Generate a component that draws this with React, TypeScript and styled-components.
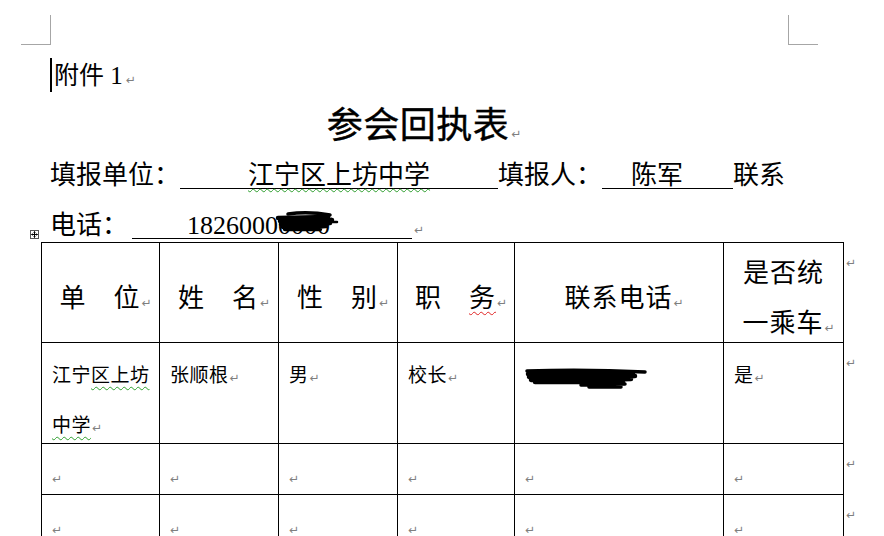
import React from "react";
import styled, { createGlobalStyle } from "styled-components";

const GlobalStyle = createGlobalStyle`
  *, *::before, *::after { box-sizing: border-box; }
  html, body { margin: 0; padding: 0; background: #fff; overflow: hidden; }
  body {
    font-family: "Liberation Serif", "Noto Sans CJK SC", serif;
    color: #000;
  }
`;

const Page = styled.div`
  width: 884px;
  height: 536px;
  overflow: hidden;
  background: #fff;
`;

const CornerRow = styled.div`
  display: flex;
  justify-content: space-between;
  padding: 15px 66px 0 21px;
`;

const Corner = styled.div<{ $side: "left" | "right" }>`
  width: 30px;
  height: 30px;
  border-bottom: 1px solid #a6a6a6;
  ${(p) =>
    p.$side === "left"
      ? "border-right: 1px solid #a6a6a6;"
      : "border-left: 1px solid #a6a6a6;"}
`;

const Body = styled.div`
  width: 788px;
  padding-left: 50px;
`;

const Attachment = styled.div`
  margin-top: 7px;
  font-size: 25px;
  line-height: 48px;
  white-space: nowrap;
`;

const Caret = styled.span`
  display: inline-block;
  width: 2px;
  height: 34px;
  background: #000;
  vertical-align: -8px;
  margin-right: 2px;
`;

const Title = styled.div`
  font-family: "Noto Sans CJK SC", sans-serif;
  font-size: 36px;
  line-height: 44px;
  text-align: center;
  margin-bottom: 7px;
  letter-spacing: 0.5px;
  -webkit-text-stroke: 0.4px #000;
`;

const FormLine = styled.div<{ $h?: number }>`
  font-size: 26px;
  line-height: 50px;
  white-space: nowrap;
  ${(p) => (p.$h ? `height: ${p.$h}px;` : "")}
`;

const Field = styled.span<{ $w: number; $pad: number; $ml?: number }>`
  display: inline-block;
  width: ${(p) => p.$w}px;
  padding-left: ${(p) => p.$pad}px;
  margin-left: ${(p) => p.$ml ?? 0}px;
  line-height: 24px;
  border-bottom: 1px solid #000;
  white-space: nowrap;
`;

const Wavy = styled.span<{ $c: "green" | "red" }>`
  text-decoration: underline wavy ${(p) => (p.$c === "green" ? "#2e9e2e" : "#e02424")};
  text-decoration-thickness: 1px;
  text-underline-offset: 4px;
`;

const Digits = styled.span`
  letter-spacing: 0;
`;

const Redacted = styled.span`
  position: relative;
`;

const ScribbleOverlay = styled.svg`
  position: absolute;
  left: -2px;
  top: 0;
  width: 62px;
  height: 22px;
  overflow: visible;
`;

const ParaMark = styled.span<{ $gap?: number }>`
  display: inline-block;
  width: 0;
  margin-left: ${(p) => p.$gap ?? 1}px;
  font-family: "DejaVu Sans", sans-serif;
  font-size: 12px;
  font-weight: 400;
  line-height: 1;
  letter-spacing: 0;
  color: #7f7f7f;
  white-space: nowrap;
  text-decoration: none;
  -webkit-text-stroke: 0;
`;

const TableArea = styled.div`
  position: relative;
  margin-left: -9px;
  display: flex;
  align-items: flex-start;
`;

const MoveHandle = styled.svg`
  position: absolute;
  left: -11px;
  top: -12px;
  width: 9px;
  height: 9px;
`;

const Grid = styled.div`
  display: grid;
  grid-template-columns: 118px 119px 119px 117px 209px 120px;
  grid-template-rows: 100px 101px 51px 51px;
  border-left: 1px solid #000;
  border-top: 1px solid #000;
`;

const Cell = styled.div<{ $head?: boolean }>`
  border-right: 1px solid #000;
  border-bottom: 1px solid #000;
  display: flex;
  flex-direction: column;
  justify-content: ${(p) => (p.$head ? "center" : "flex-start")};
  align-items: ${(p) => (p.$head ? "center" : "flex-start")};
  padding: ${(p) => (p.$head ? "12px 0 0 0" : "8px 10px 0 10px")};
  font-size: ${(p) => (p.$head ? 26 : 19)}px;
  letter-spacing: ${(p) => (p.$head ? 1 : 0.5)}px;
  line-height: 50px;
  white-space: nowrap;
  text-align: ${(p) => (p.$head ? "center" : "left")};
  min-height: 0;
`;

const CellText = styled.div`
  white-space: nowrap;
`;

const EndMarks = styled.div`
  display: grid;
  grid-template-rows: 100px 101px 51px 51px;
  padding-top: 1px;
  padding-left: 2px;
`;

const EndMark = styled.div`
  font-family: "DejaVu Sans", sans-serif;
  font-size: 12px;
  line-height: 1;
  color: #7f7f7f;
  padding-top: 14px;
`;

const Scribble = styled.svg`
  display: inline-block;
  vertical-align: middle;
  width: 122px;
  height: 22px;
`;

function FormScribble() {
  return (
    <ScribbleOverlay viewBox="0 0 62 22" aria-hidden="true">
      <g fill="none" stroke="#000" strokeLinecap="round" strokeLinejoin="round">
        <path d="M12 3 Q32 0 54 4" strokeWidth="3.5" />
        <path d="M2 7 L52 6 L4 10 L56 9 L5 13 L54 12 L7 16 L50 15 L9 18 L44 18" strokeWidth="4.5" />
        <path d="M46 11 L61 11" strokeWidth="2.5" />
      </g>
    </ScribbleOverlay>
  );
}

function CellScribble() {
  return (
    <Scribble viewBox="0 0 122 22" aria-hidden="true">
      <g fill="none" stroke="#000" strokeLinecap="round" strokeLinejoin="round">
        <path d="M2 4 Q60 2 120 5" strokeWidth="3.5" />
        <path d="M3 7 L108 6 L4 10 L110 9 L6 13 L106 12 L10 15 L98 15" strokeWidth="4.5" />
        <path d="M56 18 L100 17 M64 20 L96 20" strokeWidth="3.5" />
      </g>
    </Scribble>
  );
}

const headers: React.ReactNode[] = [
  "单\u3000位",
  "姓\u3000名",
  "性\u3000别",
  <>
    职{"\u3000"}
    <Wavy $c="red">务</Wavy>
  </>,
  "联系电话",
  <>
    是否统
    <br />
    一乘车
  </>,
];

export default function App() {
  return (
    <>
      <GlobalStyle />
      <Page>
        <CornerRow>
          <Corner $side="left" />
          <Corner $side="right" />
        </CornerRow>
        <Body>
          <Attachment>
            <Caret />
            附件 1<ParaMark $gap={3}>↵</ParaMark>
          </Attachment>
          <Title>
            参会回执表<ParaMark $gap={2}>↵</ParaMark>
          </Title>
          <FormLine>
            填报单位：
            <Field $w={318} $pad={68}>
              <Wavy $c="green">江宁区上坊中学</Wavy>
            </Field>
            填报人：
            <Field $w={131} $pad={29}>
              陈军
            </Field>
            联系
          </FormLine>
          <FormLine $h={41}>
            电话：
            <Field $w={280} $pad={55} $ml={4}>
              <Digits>
                1826000
                <Redacted>
                  0000
                  <FormScribble />
                </Redacted>
              </Digits>
            </Field>
            <ParaMark $gap={2}>↵</ParaMark>
          </FormLine>
          <TableArea>
            <MoveHandle viewBox="0 0 9 9" aria-hidden="true">
              <rect x="0.5" y="0.5" width="8" height="8" fill="#fff" stroke="#555" />
              <path d="M4.5 1.5 V7.5 M1.5 4.5 H7.5" stroke="#000" strokeWidth="1" />
              <path d="M4.5 1.5 L3.5 2.5 M4.5 1.5 L5.5 2.5 M4.5 7.5 L3.5 6.5 M4.5 7.5 L5.5 6.5 M1.5 4.5 L2.5 3.5 M1.5 4.5 L2.5 5.5 M7.5 4.5 L6.5 3.5 M7.5 4.5 L6.5 5.5" stroke="#000" strokeWidth="0.8" />
            </MoveHandle>
            <Grid>
              {headers.map((h, i) => (
                <Cell $head key={`h${i}`}>
                  <CellText>
                    {h}
                    <ParaMark $gap={1}>↵</ParaMark>
                  </CellText>
                </Cell>
              ))}
              <Cell>
                <CellText>
                  江宁<Wavy $c="green">区上坊</Wavy>
                </CellText>
                <CellText>
                  <Wavy $c="green">中学</Wavy>
                  <ParaMark>↵</ParaMark>
                </CellText>
              </Cell>
              <Cell>
                <CellText>
                  张顺根<ParaMark>↵</ParaMark>
                </CellText>
              </Cell>
              <Cell>
                <CellText>
                  男<ParaMark>↵</ParaMark>
                </CellText>
              </Cell>
              <Cell>
                <CellText>
                  校长<ParaMark>↵</ParaMark>
                </CellText>
              </Cell>
              <Cell>
                <CellText>
                  <CellScribble />
                </CellText>
              </Cell>
              <Cell>
                <CellText>
                  是<ParaMark>↵</ParaMark>
                </CellText>
              </Cell>
              {Array.from({ length: 12 }).map((_, i) => (
                <Cell key={`e${i}`}>
                  <CellText>
                    <ParaMark $gap={0}>↵</ParaMark>
                  </CellText>
                </Cell>
              ))}
            </Grid>
            <EndMarks>
              <EndMark>↵</EndMark>
              <EndMark>↵</EndMark>
              <EndMark>↵</EndMark>
              <EndMark>↵</EndMark>
            </EndMarks>
          </TableArea>
        </Body>
      </Page>
    </>
  );
}
